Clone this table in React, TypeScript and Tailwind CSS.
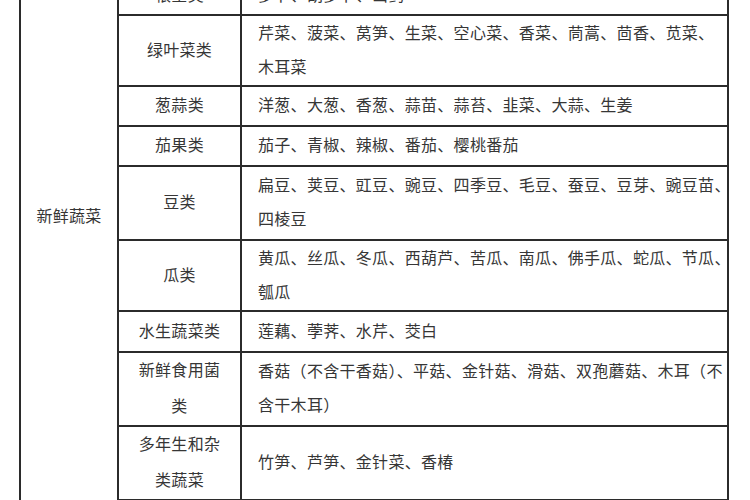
import React from 'react';

type Row = { name: string[]; items: string[]; h: string };

const rows: Row[] = [
  { name: ['根茎类'], items: ['萝卜、胡萝卜、山药'], h: 'h-[37px]' },
  {
    name: ['绿叶菜类'],
    items: ['芹菜、菠菜、莴笋、生菜、空心菜、香菜、茼蒿、茴香、苋菜、', '木耳菜'],
    h: 'h-[71px]',
  },
  { name: ['葱蒜类'], items: ['洋葱、大葱、香葱、蒜苗、蒜苔、韭菜、大蒜、生姜'], h: 'h-[40px]' },
  { name: ['茄果类'], items: ['茄子、青椒、辣椒、番茄、樱桃番茄'], h: 'h-[40px]' },
  {
    name: ['豆类'],
    items: ['扁豆、荚豆、豇豆、豌豆、四季豆、毛豆、蚕豆、豆芽、豌豆苗、', '四棱豆'],
    h: 'h-[74px]',
  },
  {
    name: ['瓜类'],
    items: ['黄瓜、丝瓜、冬瓜、西葫芦、苦瓜、南瓜、佛手瓜、蛇瓜、节瓜、', '瓠瓜'],
    h: 'h-[71px]',
  },
  { name: ['水生蔬菜类'], items: ['莲藕、荸荠、水芹、茭白'], h: 'h-[41px]' },
  {
    name: ['新鲜食用菌', '类'],
    items: ['香菇（不含干香菇）、平菇、金针菇、滑菇、双孢蘑菇、木耳（不', '含干木耳）'],
    h: 'h-[73px]',
  },
  { name: ['多年生和杂', '类蔬菜'], items: ['竹笋、芦笋、金针菜、香椿'], h: 'h-[72px]' },
  { name: [], items: [], h: 'h-[40px]' },
];

const cell = 'border-2 border-[#2b2b2b] align-middle';

export default function App() {
  return (
    <div className="w-[750px] h-[500px] overflow-hidden bg-white text-[#363636] font-['Liberation_Serif','Noto_Sans_CJK_SC',serif] text-[16px] tracking-[0.3px]">
      <table className="table-fixed border-collapse w-[708px] ml-[19px] -mt-[24px]">
        <colgroup>
          <col className="w-[98px]" />
          <col className="w-[123px]" />
          <col className="w-[487px]" />
        </colgroup>
        <tbody>
          {rows.map((r, i) => (
            <tr key={i} className={r.h}>
              {i === 0 && (
                <td rowSpan={rows.length} className="border-2 border-[#2b2b2b] align-top text-center">
                  <div className="pt-[227px] leading-[24px]">新鲜蔬菜</div>
                </td>
              )}
              <td className={`${cell} text-center leading-[36px]`}>
                {r.name.map((n, k) => (
                  <div key={k}>{n}</div>
                ))}
              </td>
              <td className={`${cell} pl-[16px] leading-[34px] whitespace-nowrap`}>
                {r.items.map((t, k) => (
                  <div key={k}>{t}</div>
                ))}
              </td>
            </tr>
          ))}
        </tbody>
      </table>
    </div>
  );
}
